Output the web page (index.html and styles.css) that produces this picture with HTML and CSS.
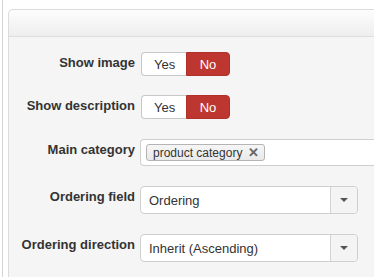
FILE: index.html
```html
<!DOCTYPE html>
<html lang="en">
<head>
    <meta charset="UTF-8">
    <title>Category Options</title>
    <link rel="stylesheet" href="styles.css">
</head>
<body>

<div class="page">
    <div class="panel">
        <div class="panel-head"></div>

        <div class="panel-body">

            <div class="form-row first-row">
                <label class="row-label">Show image</label>
                <div class="toggle">
                    <button class="toggle-yes">Yes</button>
                    <button class="toggle-no">No</button>
                </div>
            </div>

            <div class="form-row">
                <label class="row-label">Show description</label>
                <div class="toggle">
                    <button class="toggle-yes">Yes</button>
                    <button class="toggle-no">No</button>
                </div>
            </div>

            <div class="form-row">
                <label class="row-label">Main category</label>
                <div class="tag-input">
                    <span class="tag">product category <span class="tag-close">&#x2715;</span></span>
                </div>
            </div>

            <div class="form-row">
                <label class="row-label">Ordering field</label>
                <div class="select-box">
                    <span class="select-value">Ordering</span>
                    <span class="select-arrow"><span class="caret"></span></span>
                </div>
            </div>

            <div class="form-row">
                <label class="row-label">Ordering direction</label>
                <div class="select-box">
                    <span class="select-value">Inherit (Ascending)</span>
                    <span class="select-arrow"><span class="caret"></span></span>
                </div>
            </div>

        </div>
    </div>
</div>

</body>
</html>
```

FILE: styles.css
```css
* {
    box-sizing: border-box;
}

body {
    font-family: 'Liberation Sans', Arial, Helvetica, sans-serif;
    font-size: 13px;
    color: #333;
    margin: 0;
    background-color: #fff;
    height: 277px;
    overflow: hidden;
}

.page {
    margin-left: 2px;
    border-left: 1px solid #d4d4d4;
    padding: 9px 0 0 5px;
    height: 100%;
}

.panel {
    border: 1px solid #dcdcdc;
    border-right: none;
    border-bottom: none;
    border-radius: 5px 0 0 0;
    background: #f5f5f5;
    height: 100%;
}

.panel-head {
    height: 27px;
    border-radius: 5px 0 0 0;
    background: linear-gradient(#fdfdfd, #eeeeee);
    border-bottom: 1px solid #dedede;
}

.panel-body {
    padding-top: 15px;
}

.form-row {
    display: flex;
    align-items: flex-start;
    margin-bottom: 20px;
}

.first-row {
    margin-bottom: 19px;
}

.row-label {
    width: 126px;
    flex-shrink: 0;
    text-align: right;
    font-weight: bold;
    padding-top: 3px;
    margin-right: 5px;
    line-height: 16px;
    color: #333;
}

.toggle {
    display: flex;
    height: 24px;
    margin-left: 1px;
}

.toggle button {
    font-family: inherit;
    font-size: 13px;
    height: 24px;
    padding: 0 12px;
    cursor: pointer;
}

.toggle-yes {
    width: 45px;
    background: #fff;
    color: #333;
    border: 1px solid #c8c8c8;
    border-right: none;
    border-radius: 4px 0 0 4px;
}

.toggle-no {
    width: 44px;
    background: #bd362f;
    color: #fff;
    border: 1px solid #b0302a;
    border-radius: 0 4px 4px 0;
}

.tag-input {
    flex: 1;
    height: 27px;
    background: #fff;
    border: 1px solid #cfcfcf;
    border-right: none;
    border-radius: 4px 0 0 4px;
    padding: 4px 0 0 5px;
}

.tag {
    display: inline-block;
    height: 17px;
    line-height: 15px;
    padding: 0 5px 0 6px;
    font-size: 12px;
    color: #333;
    border: 1px solid #b4b4b4;
    border-radius: 3px;
    background: linear-gradient(#f6f6f6, #e9e9e9);
}

.tag-close {
    color: #666;
    font-size: 13px;
    font-weight: bold;
    margin-left: 2px;
}

.select-box {
    display: flex;
    width: 218px;
    height: 28px;
    background: #fff;
    border: 1px solid #cfcfcf;
    border-radius: 4px;
}

.select-value {
    flex: 1;
    padding: 6px 0 0 8px;
    font-size: 13px;
    color: #333;
}

.select-arrow {
    width: 27px;
    display: flex;
    align-items: center;
    justify-content: center;
    background: #f4f4f4;
    border-left: 1px solid #d4d4d4;
    border-radius: 0 4px 4px 0;
}

.caret {
    width: 0;
    height: 0;
    border-left: 4px solid transparent;
    border-right: 4px solid transparent;
    border-top: 4px solid #555;
}
```
